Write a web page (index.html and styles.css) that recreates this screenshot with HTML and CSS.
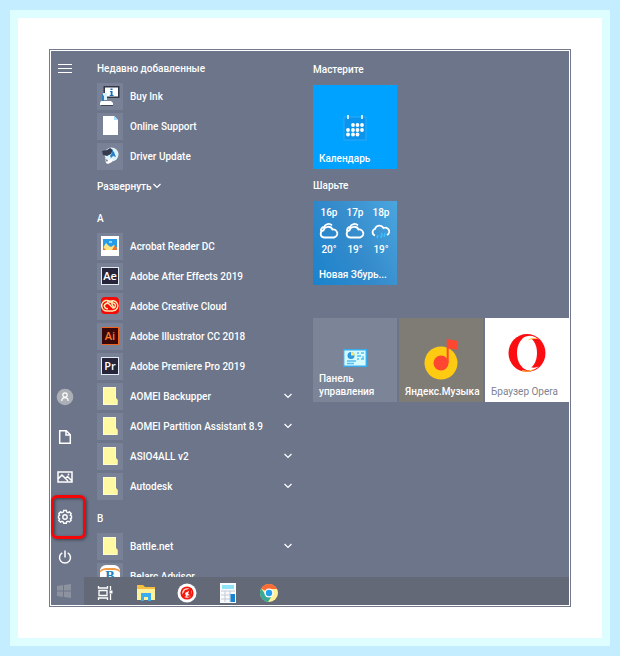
FILE: index.html
```html
<!DOCTYPE html>
<html lang="ru">
<head>
<meta charset="utf-8">
<meta name="viewport" content="width=device-width, initial-scale=1">
<title>Пуск</title>
<link rel="stylesheet" href="styles.css">
</head>
<body>
<svg class="defs" aria-hidden="true">
  <symbol id="chev" viewBox="0 0 10 10"><path d="M1.500 3 5 6.400 8.500 3" fill="none" stroke="#fff" stroke-width="1.300"/></symbol>
  <symbol id="folder" viewBox="0 0 20 20"><path d="M3 1h13v11l1.500 1.500V19H3z" fill="#fff9a4"/><path d="M3.500 1.500h12v11l1.500 1.500v4.500H3.500z" fill="none" stroke="#fffcd0"/><path d="M14 13h3v5h-3z" fill="#fff6a0"/></symbol>
  <symbol id="cloud" viewBox="0 0 20 16"><path d="M5 14.500a3.600 3.600 0 0 1-.5-7.100A4.800 4.800 0 0 1 13.500 6.500a4 4 0 1 1 1.500 8zM2 8A3.500 3.500 0 0 1 5 4 4.800 4.800 0 0 1 13 2.500" fill="none" stroke="#fff" stroke-width="1.800"/></symbol>
</svg>
<main class="window">
  <section class="menu">
    <nav class="rail">
      <button class="rail-btn" aria-label="Меню"><svg width="14" height="9" viewBox="0 0 14 9"><path d="M0 .5h14M0 4.500h14M0 8.500h14" stroke="#fff"/></svg></button>
      <div class="rail-bottom">
        <button class="rail-btn" aria-label="Пользователь"><svg width="18" height="18" viewBox="0 0 18 18"><circle cx="9" cy="9" r="8.300" fill="#acafb5"/><circle cx="9" cy="7" r="2.200" fill="none" stroke="#fff" stroke-width="1.200"/><path d="M5.800 13c0-4.500 6.400-4.500 6.400 0" fill="none" stroke="#fff" stroke-width="1.200"/></svg></button>
        <button class="rail-btn" aria-label="Документы"><svg width="14" height="16" viewBox="0 0 14 16"><path d="M1.700 1.700h6.600l4 4v8.600H1.700zM8 2v4h4" fill="none" stroke="#fff" stroke-width="1.500"/></svg></button>
        <button class="rail-btn" aria-label="Изображения"><svg width="16" height="12" viewBox="0 0 16 12"><path d="M1 1h14v10H1zM1 8l4-4 6 6M8.500 7.500l2-2 4 4" fill="none" stroke="#fff" stroke-width="1.500"/><circle cx="11.500" cy="3.500" r=".9" fill="#fff"/></svg></button>
        <button class="rail-btn marked" aria-label="Параметры"><svg width="16" height="16" viewBox="0 0 16 16"><path d="M6.700 1.500h2.600l.4 1.600 1.300.6 1.500-.8 1.700 1.800-.9 1.500 1.200.8v2l-1.200.7.9 1.500-1.700 1.800-1.500-.8-1.300.6-.4 1.500H6.700L6.300 13 5 12.400l-1.500.8-1.700-1.800.9-1.500L1.500 9V7l1.200-.8-.9-1.500 1.700-1.800 1.500.8 1.300-.6z" fill="none" stroke="#fff" stroke-width="1.400"/><circle cx="8" cy="8" r="2.200" fill="none" stroke="#fff" stroke-width="1.400"/></svg></button>
        <button class="rail-btn" aria-label="Выключение"><svg width="14" height="15" viewBox="0 0 14 15"><path d="M4.300 2.800a5.500 5.500 0 1 0 5.400 0M7 .5v7" fill="none" stroke="#fff" stroke-width="1.500"/></svg></button>
      </div>
    </nav>

    <div class="apps">
      <h2 class="row">Недавно добавленные</h2>
      <a class="row" href="#"><span class="icon"><svg width="20" height="22" viewBox="0 0 20 22"><path d="M3.500 1h16v12h-16z" fill="#323746"/><path d="M5 2.500h13v9H5z" fill="#fff"/><path d="M10.500 3.500h2V5h-2zM10 6h2.500v4h1v1H9.700v-1h1V7H10z" fill="#116dc2"/><path d="M3 8h4v7H3z" fill="#d9eff9"/><path d="M2 9v7h2v-5" fill="#317dba"/><path d="M1 16h10l2 2v2H0v-2z" fill="#fff"/><path d="M1 20h12v1H1z" fill="#414758"/></svg></span><span class="name">Buy Ink</span></a>
      <a class="row" href="#"><span class="icon"><svg width="20" height="20" viewBox="0 0 20 20"><path d="M3 0h11l4 4v15H3z" fill="#fff"/><path d="M14 0v4h4z" fill="#a5ddff"/></svg></span><span class="name">Online Support</span></a>
      <a class="row" href="#"><span class="icon"><svg width="20" height="20" viewBox="0 0 20 20"><circle cx="11.500" cy="8.500" r="7" fill="#dff3fb"/><path d="M2 5l5-1 3-2 3 2-2 4-4 2-4-1z" fill="#343b50"/><path d="M12 4l2 2 2 5-3-1-2 2-1-2 2-3z" fill="#2880c8"/><path d="M5 12l4 2 4-1-1 3-4 2-2-1z" fill="#fff"/><path d="M5 13l3 1-1 2z" fill="#6c7589"/></svg></span><span class="name">Driver Update</span></a>
      <button class="row expand">Развернуть <svg width="10" height="10"><use href="#chev"/></svg></button>

      <h2 class="row">A</h2>
      <a class="row" href="#"><span class="icon"><svg width="20" height="20" viewBox="0 0 20 20"><path d="M1 0h18v20H1z" fill="#fff"/><path d="M3 3h14v11H3z" fill="#269bea"/><path d="M9 5h3v2H9z" fill="#8adaff"/><path d="M3 12l3-5 3 3 2 1 3-2 3 3v2H3z" fill="#ffe681"/><path d="M3 14v-3l3 3zM12 14l3-5 2 3v2z" fill="#e97432"/></svg></span><span class="name">Acrobat Reader DC</span></a>
      <a class="row" href="#"><span class="icon"><span class="logo">Ae</span></span><span class="name">Adobe After Effects 2019</span></a>
      <a class="row" href="#"><span class="icon"><svg width="20" height="20" viewBox="0 0 20 20"><rect x="1" y="1" width="18" height="17" rx="4" fill="#f50b05"/><g fill="none" stroke="#ffe7ae" stroke-width="1.500"><path d="M7 15a5.300 5.300 0 1 1 5-7l2 4M13 14.700a5 5 0 1 0-4-8.200"/><path d="M7 5.500h6M8 12.500a2.700 2.700 0 1 1 1-4.500l4 4a2.500 2.500 0 1 0-1.500-4.500M7 15h6"/></g></svg></span><span class="name">Adobe Creative Cloud</span></a>
      <a class="row" href="#"><span class="icon"><span class="logo ai">Ai</span></span><span class="name">Adobe Illustrator CC 2018</span></a>
      <a class="row" href="#"><span class="icon"><span class="logo">Pr</span></span><span class="name">Adobe Premiere Pro 2019</span></a>
      <button class="row"><span class="icon"><svg width="20" height="20"><use href="#folder"/></svg></span><span class="name">AOMEI Backupper</span><svg width="10" height="10"><use href="#chev"/></svg></button>
      <button class="row"><span class="icon"><svg width="20" height="20"><use href="#folder"/></svg></span><span class="name">AOMEI Partition Assistant 8.9</span><svg width="10" height="10"><use href="#chev"/></svg></button>
      <button class="row"><span class="icon"><svg width="20" height="20"><use href="#folder"/></svg></span><span class="name">ASIO4ALL v2</span><svg width="10" height="10"><use href="#chev"/></svg></button>
      <button class="row"><span class="icon"><svg width="20" height="20"><use href="#folder"/></svg></span><span class="name">Autodesk</span><svg width="10" height="10"><use href="#chev"/></svg></button>

      <h2 class="row">B</h2>
      <button class="row"><span class="icon"><svg width="20" height="20"><use href="#folder"/></svg></span><span class="name">Battle.net</span><svg width="10" height="10"><use href="#chev"/></svg></button>
      <a class="row" href="#"><span class="icon"><span class="belarc">B</span></span><span class="name">Belarc Advisor</span></a>
    </div>

    <div class="tiles">
      <h2 class="group">Мастерите</h2>
      <div class="tile-row">
        <a class="tile calendar" href="#"><svg class="art" width="26" height="30" viewBox="0 0 26 30"><path d="M2 5h22v23H2z" fill="#0b94ee"/><path d="M2 5h22v23H2z" fill="none" stroke="#2fa9f7"/><path d="M5 3h2v4H5zM19 3h2v4h-2z" fill="#c8ecff"/><g fill="#fff"><circle cx="11" cy="13" r="1.900"/><circle cx="15.500" cy="13" r="1.900"/><circle cx="20" cy="13" r="1.900"/><circle cx="6" cy="18" r="1.900"/><circle cx="11" cy="18" r="1.900"/><circle cx="15.500" cy="18" r="1.900"/><circle cx="20" cy="18" r="1.900"/><circle cx="6" cy="22.500" r="1.900"/><circle cx="11" cy="22.500" r="1.900"/><circle cx="15.500" cy="22.500" r="1.900"/></g></svg><span>Календарь</span></a>
      </div>
      <h2 class="group">Шарьте</h2>
      <div class="tile-row">
        <a class="tile weather" href="#">
          <span class="hours">
            <span class="hour">16р<svg width="20" height="16"><use href="#cloud"/></svg>20°</span>
            <span class="hour">17р<svg width="20" height="16"><use href="#cloud"/></svg>19°</span>
            <span class="hour">18р<svg width="20" height="16" viewBox="0 0 20 16"><path d="M4 12.500a3.400 3.400 0 0 1 0-6.500A4.600 4.600 0 0 1 12.500 5a3.900 3.900 0 0 1 3.500 7" fill="none" stroke="#fff" stroke-width="1.800"/><path d="M7 12l-1 3M11 10l-1 5M14 10l-1 4" stroke="#39c0ff" stroke-width="1.600"/></svg>19°</span>
          </span>
          <span>Новая Збурь...</span>
        </a>
      </div>
      <div class="tile-row apart">
        <a class="tile panel" href="#"><svg class="art" width="24" height="18" viewBox="0 0 24 18"><path d="M.7.700h22.600v16.600H.7z" fill="#d6fbff" stroke="#36abed" stroke-width="1.400"/><circle cx="8" cy="6.500" r="3.500" fill="#2b9ae3"/><path d="M8 6.500V3a3.500 3.500 0 0 1 3.500 3.500z" fill="#ffe96b"/><path d="M14 4h2M18 4h3M14 7h4M20 7v3M14 10h2M18 10h3M4 12h9M4 14.500h7" stroke="#55bff0" stroke-width="1.300"/></svg><span>Панель<br>управления</span></a>
        <a class="tile music" href="#"><svg class="art" width="34" height="42" viewBox="0 0 34 42"><circle cx="17" cy="25" r="16.500" fill="#ffcb12"/><circle cx="17" cy="25" r="7.500" fill="#ff4630"/><path d="M22.700 1l11.300 2v9l-9.300-1.500V25h-2z" fill="#ff4630"/></svg><span>Яндекс.Музыка</span></a>
        <a class="tile opera" href="#"><svg class="art" width="38" height="38" viewBox="0 0 38 38"><ellipse cx="19" cy="19" rx="18.500" ry="19" fill="#fc0d12"/><ellipse cx="19" cy="19" rx="10" ry="16" fill="#fff"/><path d="M14 4.500Q20 0 27 3l4 2.500Q25 3 20.500 6zM14 33.500Q20 38 27 35l4-2.500Q25 35 20.500 32z" fill="#fff"/><path d="M14 36.800q6 1.500 12-1.300M20.500 6q3-2.500 8-1.500" fill="none" stroke="#ffd34a"/></svg><span>Браузер Opera</span></a>
      </div>
    </div>
  </section>

  <footer class="taskbar">
    <button class="start" aria-label="Пуск"><svg width="14" height="14" viewBox="0 0 14 14"><path d="M0 2l6-1v5.500H0zM7 1l7-1v6.500H7zM0 7.500h6V13l-6-1zM7 7.500h7V14l-7-1z" fill="#8d929f"/></svg></button>
    <div class="pinned">
      <button aria-label="Представление задач"><svg width="16" height="14" viewBox="0 0 16 14"><path d="M2 4.500h8v5H2zM1.500 0v2h9V0M1.500 14v-2h9v2M13.500 0v4M13.500 8v6" fill="none" stroke="#fff" stroke-width="1.300"/><path d="M12.500 4.500h3v3h-3z" fill="#fff"/></svg></button>
      <button aria-label="Проводник"><svg width="20" height="18" viewBox="0 0 20 18"><path d="M1 1h6l2 2h10v13H1z" fill="#f4bf43"/><path d="M1 5h18v11H1z" fill="#fff09c"/><path d="M5 17V9h10v8h-3v-4H8v4z" fill="#38aef0"/></svg></button>
      <button aria-label="Браузер"><svg width="20" height="20" viewBox="0 0 20 20"><circle cx="10" cy="10" r="9.500" fill="#fff"/><circle cx="10" cy="10" r="5.700" fill="#ffe0d2" stroke="#f3180e" stroke-width="1.800"/><path d="M5 12l3-5 4-1 3-1-1 3 1 4-3 2-3-1-3 2z" fill="#f3180e"/><path d="M8 10l4-2-1 3 2 1-4 1z" fill="#fff"/></svg></button>
      <button aria-label="Калькулятор"><svg width="16" height="20" viewBox="0 0 16 20"><path d="M0 0h16v20H0z" fill="#f8fbfd"/><path d="M2 2h12v4H2z" fill="#8fe4f7"/><path d="M1 8h14M1 12h14M1 16h14M5 8v11M10 8v11" stroke="#c3cad3"/><path d="M10.500 11H15v8h-4.500z" fill="#1683d4"/></svg></button>
      <button aria-label="Chrome"><svg width="20" height="20" viewBox="0 0 20 20"><circle cx="10" cy="10" r="9" fill="#fff095"/><path d="M10 10L2.200 5.500A9 9 0 0 1 18 6h-8z" fill="#fb6b35"/><path d="M2.200 5.500A9 9 0 0 0 9 19l4.500-7-7-.5z" fill="#3aa895"/><circle cx="10" cy="10" r="4.600" fill="#fff"/><circle cx="10" cy="10" r="3.200" fill="#259ff0"/></svg></button>
    </div>
  </footer>
</main>
</body>
</html>
```
FILE: styles.css
```css
* {
  box-sizing: border-box;
}

body {
  margin: 0;
  min-height: 100vh;
  border: 10px solid #c4eeff;
  background: #fff;
  box-shadow: inset 0 0 0 8px #ddfdff;
  padding: 39px;
  color: #fff;
  font: 500 10px/13px Roboto, "Open Sans", sans-serif;
}

.defs {
  position: absolute;
  width: 0;
  height: 0;
}

button {
  padding: 0;
  border: 0;
  background: none;
  color: inherit;
  font: inherit;
  text-align: left;
}

a {
  color: inherit;
  text-decoration: none;
}

h2 {
  margin: 0;
  font: inherit;
}

svg {
  display: block;
  flex: none;
}

.window {
  padding: 1px;
  border: 1px solid #73798b;
  background: #fff;
}

.menu {
  display: grid;
  grid-template-columns: 33px 1fr 256px;
  height: calc(100vh - 130px);
  background: #6c7589;
}

.rail {
  display: flex;
  flex-direction: column;
  justify-content: space-between;
  padding-top: 2px;
}

.rail-btn {
  position: relative;
  display: flex;
  align-items: center;
  justify-content: center;
  width: 27px;
  height: 40px;
}

.rail > .rail-btn {
  height: 31px;
}

.marked::after {
  content: "";
  position: absolute;
  inset: -2px -8px -2px 0;
  border: 3px solid #f50505;
  border-radius: 6px;
  box-shadow: 1px 1px 3px #3d4250, inset 1px 1px 3px #3d4250;
}

.apps {
  overflow: hidden;
  padding: 0 20px 0 13px;
}

.row {
  display: flex;
  align-items: center;
  gap: 7px;
  width: 100%;
  height: 30px;
}

h2.row {
  padding-top: 4px;
}

.name {
  flex: 1;
  white-space: nowrap;
}

.expand {
  gap: 0;
}

.icon {
  display: flex;
  align-items: center;
  justify-content: center;
  width: 26px;
  height: 27px;
  background: #788195;
}

.logo {
  width: 18px;
  height: 18px;
  border: 1px solid #e3eef4;
  background: #25243a;
  font: 600 11px/15px "Open Sans", sans-serif;
  text-align: center;
}

.ai {
  border-color: #f0641e;
  background: #390808;
  color: #ff7a2a;
}

.belarc {
  width: 20px;
  height: 22px;
  border-top: 3px solid #fff;
  border-radius: 6px;
  background: #fff;
  color: #2382bd;
  font: 700 14px/18px "Liberation Serif", serif;
  text-align: center;
  box-shadow: inset 0 2px 0 #f29a43;
}

.group {
  padding: 10px 0 9px;
}

.group:first-child {
  padding: 12px 0 9px;
}

.tile-row {
  display: grid;
  grid-template-columns: repeat(3, minmax(0, 1fr));
  gap: 2px;
}

.apart {
  margin-top: 33px;
}

.tile {
  display: flex;
  flex-direction: column;
  height: 84px;
  padding: 0 6px 4px;
}

.tile > span {
  white-space: nowrap;
}

.art {
  margin: auto auto 0;
}

.calendar {
  background: #00a2ff;
}

.calendar .art {
  margin-bottom: 10px;
}

.weather {
  justify-content: space-between;
  padding: 5px 3px 4px 6px;
  background: linear-gradient(60deg, #1983cd, #358bcb 50%, #4aa6df);
}

.hours {
  display: grid;
  grid-template-columns: repeat(3, 1fr);
  margin: 0 0 0 -3px;
}

.hour {
  display: flex;
  flex-direction: column;
  align-items: center;
  gap: 4px;
}

.panel {
  background: #7c8498;
}

.music {
  background: #7f7c76;
}

.opera {
  background: #fff;
  color: #7d8391;
  font-weight: 400;
}

.panel .art {
  margin-bottom: 5px;
}

.music .art {
  margin-bottom: 5px;
}

.opera .art {
  margin-bottom: 13px;
}

.taskbar {
  display: flex;
  height: 28px;
  background: #636977;
}

.start {
  display: flex;
  align-items: center;
  justify-content: center;
  width: 33px;
  padding-right: 7px;
  background: #6c7589;
}

.pinned {
  display: flex;
  align-items: center;
  padding-top: 3px;
}

.pinned button {
  display: flex;
  justify-content: center;
  width: 41px;
}
```
